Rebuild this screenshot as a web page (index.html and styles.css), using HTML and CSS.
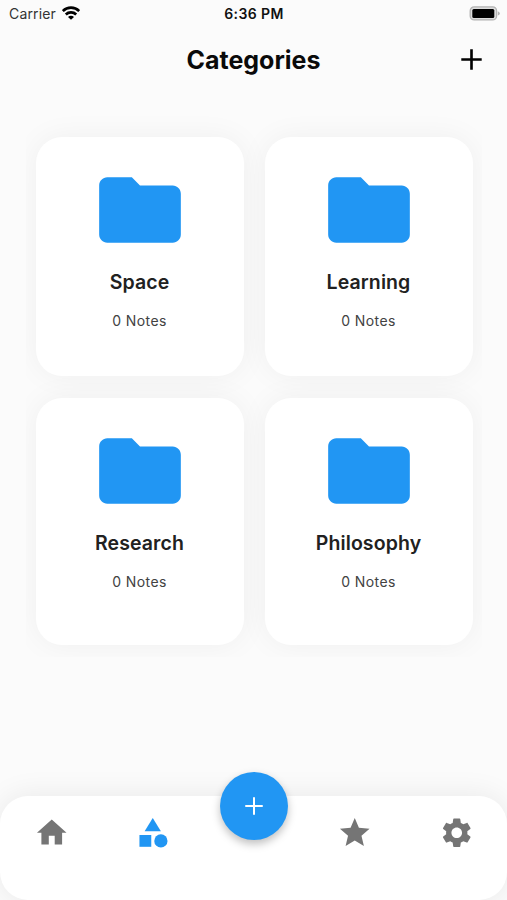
FILE: index.html
```
<!DOCTYPE html>
<html lang="en">
<head>
	<meta charset="UTF-8">
	<title>Categories</title>
	<link rel="stylesheet" href="styles.css">
</head>
<body>
	<div class="status">
		<div class="carrier">
			<span>Carrier</span>
			<svg width="18" height="14" viewBox="0 0 18 14" fill="none" stroke="#000" stroke-width="2.7">
				<path d="M.8 5.1a11.6 11.6 0 0 1 16.4 0"/>
				<path d="M3.8 8.5a7.5 7.5 0 0 1 10.4 0"/>
				<path d="M9 13.8L6 11a4.2 4.2 0 0 1 6 0z" fill="#000" stroke="none"/>
			</svg>
		</div>
		<div class="time">6:36 PM</div>
		<div class="battery">
			<svg width="31" height="15" viewBox="0 0 31 15">
				<rect x="1.2" y=".9" width="26.4" height="13" rx="4" fill="#ddd" stroke="#b2b2b2" stroke-width="1.3"/>
				<rect x="3.3" y="3" width="22" height="9" rx="1.5" fill="#000"/>
				<path d="M28.8 5.3q2 .8 2 2.1t-2 2.1z" fill="#b2b2b2"/>
			</svg>
		</div>
	</div>
	<div class="header">
		<h1>Categories</h1>
		<svg class="add" viewBox="0 0 24 24"><path d="M19 12.9h-6.1V19h-1.8v-6.1H5v-1.8h6.1V5h1.8v6.1H19z"/></svg>
	</div>
	<div class="grid">
		<div class="card">
			<svg class="folder" viewBox="0 0 24 24"><path d="M10 4H4c-1.1 0-2 .9-2 2v12c0 1.1.9 2 2 2h16c1.1 0 2-.9 2-2V8c0-1.1-.9-2-2-2h-8l-2-2z"/></svg>
			<h2>Space</h2>
			<p>0 Notes</p>
		</div>
		<div class="card">
			<svg class="folder" viewBox="0 0 24 24"><path d="M10 4H4c-1.1 0-2 .9-2 2v12c0 1.1.9 2 2 2h16c1.1 0 2-.9 2-2V8c0-1.1-.9-2-2-2h-8l-2-2z"/></svg>
			<h2>Learning</h2>
			<p>0 Notes</p>
		</div>
		<div class="card">
			<svg class="folder" viewBox="0 0 24 24"><path d="M10 4H4c-1.1 0-2 .9-2 2v12c0 1.1.9 2 2 2h16c1.1 0 2-.9 2-2V8c0-1.1-.9-2-2-2h-8l-2-2z"/></svg>
			<h2>Research</h2>
			<p>0 Notes</p>
		</div>
		<div class="card">
			<svg class="folder" viewBox="0 0 24 24"><path d="M10 4H4c-1.1 0-2 .9-2 2v12c0 1.1.9 2 2 2h16c1.1 0 2-.9 2-2V8c0-1.1-.9-2-2-2h-8l-2-2z"/></svg>
			<h2>Philosophy</h2>
			<p>0 Notes</p>
		</div>
	</div>
	<div class="nav">
		<a class="item"><svg viewBox="0 0 24 24"><path d="M10 20v-6h4v6h5v-8h3L12 3 2 12h3v8z"/></svg></a>
		<a class="item active"><svg viewBox="0 0 24 24"><path d="M12 2l-5.5 9h11z"/><circle cx="17.5" cy="17.5" r="4.5"/><path d="M3 13.5h8v8H3z"/></svg></a>
		<span class="item"></span>
		<a class="item"><svg viewBox="0 0 24 24"><path d="M12 17.27L18.18 21l-1.64-7.03L22 9.24l-7.19-.61L12 2 9.19 8.63 2 9.24l5.46 4.73L5.82 21z"/></svg></a>
		<a class="item"><svg viewBox="0 0 24 24"><path d="M19.14 12.94c.04-.3.06-.61.06-.94 0-.32-.02-.64-.07-.94l2.03-1.58c.18-.14.23-.41.12-.61l-1.92-3.32c-.12-.22-.37-.29-.59-.22l-2.39.96c-.5-.38-1.03-.7-1.62-.94l-.36-2.54c-.04-.24-.24-.41-.48-.41h-3.84c-.24 0-.43.17-.47.41l-.36 2.54c-.59.24-1.13.57-1.62.94l-2.39-.96c-.22-.08-.47 0-.59.22L2.74 8.87c-.12.21-.08.47.12.61l2.03 1.58c-.05.3-.09.63-.09.94s.02.64.07.94l-2.03 1.58c-.18.14-.23.41-.12.61l1.92 3.32c.12.22.37.29.59.22l2.39-.96c.5.38 1.03.7 1.62.94l.36 2.54c.05.24.24.41.48.41h3.84c.24 0 .44-.17.47-.41l.36-2.54c.59-.24 1.13-.56 1.62-.94l2.39.96c.22.08.47 0 .59-.22l1.92-3.32c.12-.22.07-.47-.12-.61l-2.01-1.58zM12 15.6c-1.98 0-3.6-1.62-3.6-3.6s1.62-3.6 3.6-3.6 3.6 1.62 3.6 3.6-1.62 3.6-3.6 3.6z"/></svg></a>
		<div class="fab"><svg viewBox="0 0 24 24"><path d="M19 12.8h-6.2V19h-1.6v-6.2H5v-1.6h6.2V5h1.6v6.2H19z"/></svg></div>
	</div>
</body>
</html>
```
FILE: styles.css
```
*{
	margin: 0;
	padding: 0;
	box-sizing: border-box;
}
body{
	display: flex;
	flex-direction: column;
	height: 900px;
	background-color: #fbfbfb;
	font-family: Inter, "Liberation Sans", sans-serif;
	overflow: hidden;
}
svg{
	display: block;
}
.status{
	display: grid;
	grid-template-columns: 1fr auto 1fr;
	align-items: center;
	height: 28px;
	padding: 0 7px 0 9px;
	font-size: 14px;
	line-height: 28px;
}
.carrier{
	display: flex;
	align-items: center;
	gap: 6px;
	color: #333;
	letter-spacing: 0.15px;
}
.carrier svg{
	margin-top: -2px;
}
.time{
	font-weight: 600;
	letter-spacing: 0.4px;
	margin-right: 1px;
	color: #111;
}
.battery{
	justify-self: end;
	margin-top: -1px;
}
.header{
	display: grid;
	grid-template-columns: 1fr auto 1fr;
	align-items: center;
	height: 64px;
	padding: 0 18px;
}
.header h1{
	grid-column: 2;
	font-size: 25px;
	line-height: 32px;
	font-weight: 700;
	color: #0a0a0a;
}
.add{
	justify-self: end;
	width: 35px;
	height: 35px;
	margin-top: -1px;
}
.grid{
	display: grid;
	grid-template-columns: 208px 208px;
	grid-template-rows: 239px 247px;
	gap: 22px 21px;
	margin: 20px 25px 0 26px;
	padding: 25px 9.5px 12px;
	overflow: hidden;
}
.card{
	display: flex;
	flex-direction: column;
	align-items: center;
	padding-top: 24px;
	border-radius: 26px;
	background-color: #fff;
	box-shadow: 0 0 30px rgba(0,0,0,0.05);
}
.folder{
	width: 98px;
	height: 98px;
	fill: #2196f3;
}
.card h2{
	margin-top: 10px;
	font-size: 19.5px;
	line-height: 26px;
	font-weight: 600;
	letter-spacing: 0.1px;
	color: #212121;
}
.card p{
	margin-top: 16px;
	font-size: 14px;
	line-height: 20px;
	letter-spacing: 0.4px;
	color: #424242;
}
.nav{
	position: relative;
	display: flex;
	height: 104px;
	margin-top: auto;
	padding: 19px 0 0 1px;
	border-radius: 28px;
	background-color: #fff;
	box-shadow: 0 0 30px rgba(0,0,0,0.08);
}
.item{
	display: flex;
	flex: 1;
	justify-content: center;
}
.item svg{
	width: 35.5px;
	height: 35.5px;
	fill: #757575;
}
.active svg{
	fill: #2196f3;
}
/* sits over the top edge of the bar */
.fab{
	position: absolute;
	left: 50%;
	top: -24px;
	display: flex;
	align-items: center;
	justify-content: center;
	width: 68px;
	height: 68px;
	margin-left: -33.5px;
	border-radius: 50%;
	background-color: #2196f3;
	box-shadow: 0 4px 8px rgba(0,0,0,0.25);
}
.fab svg{
	width: 30px;
	height: 30px;
	fill: #fff;
}
```
